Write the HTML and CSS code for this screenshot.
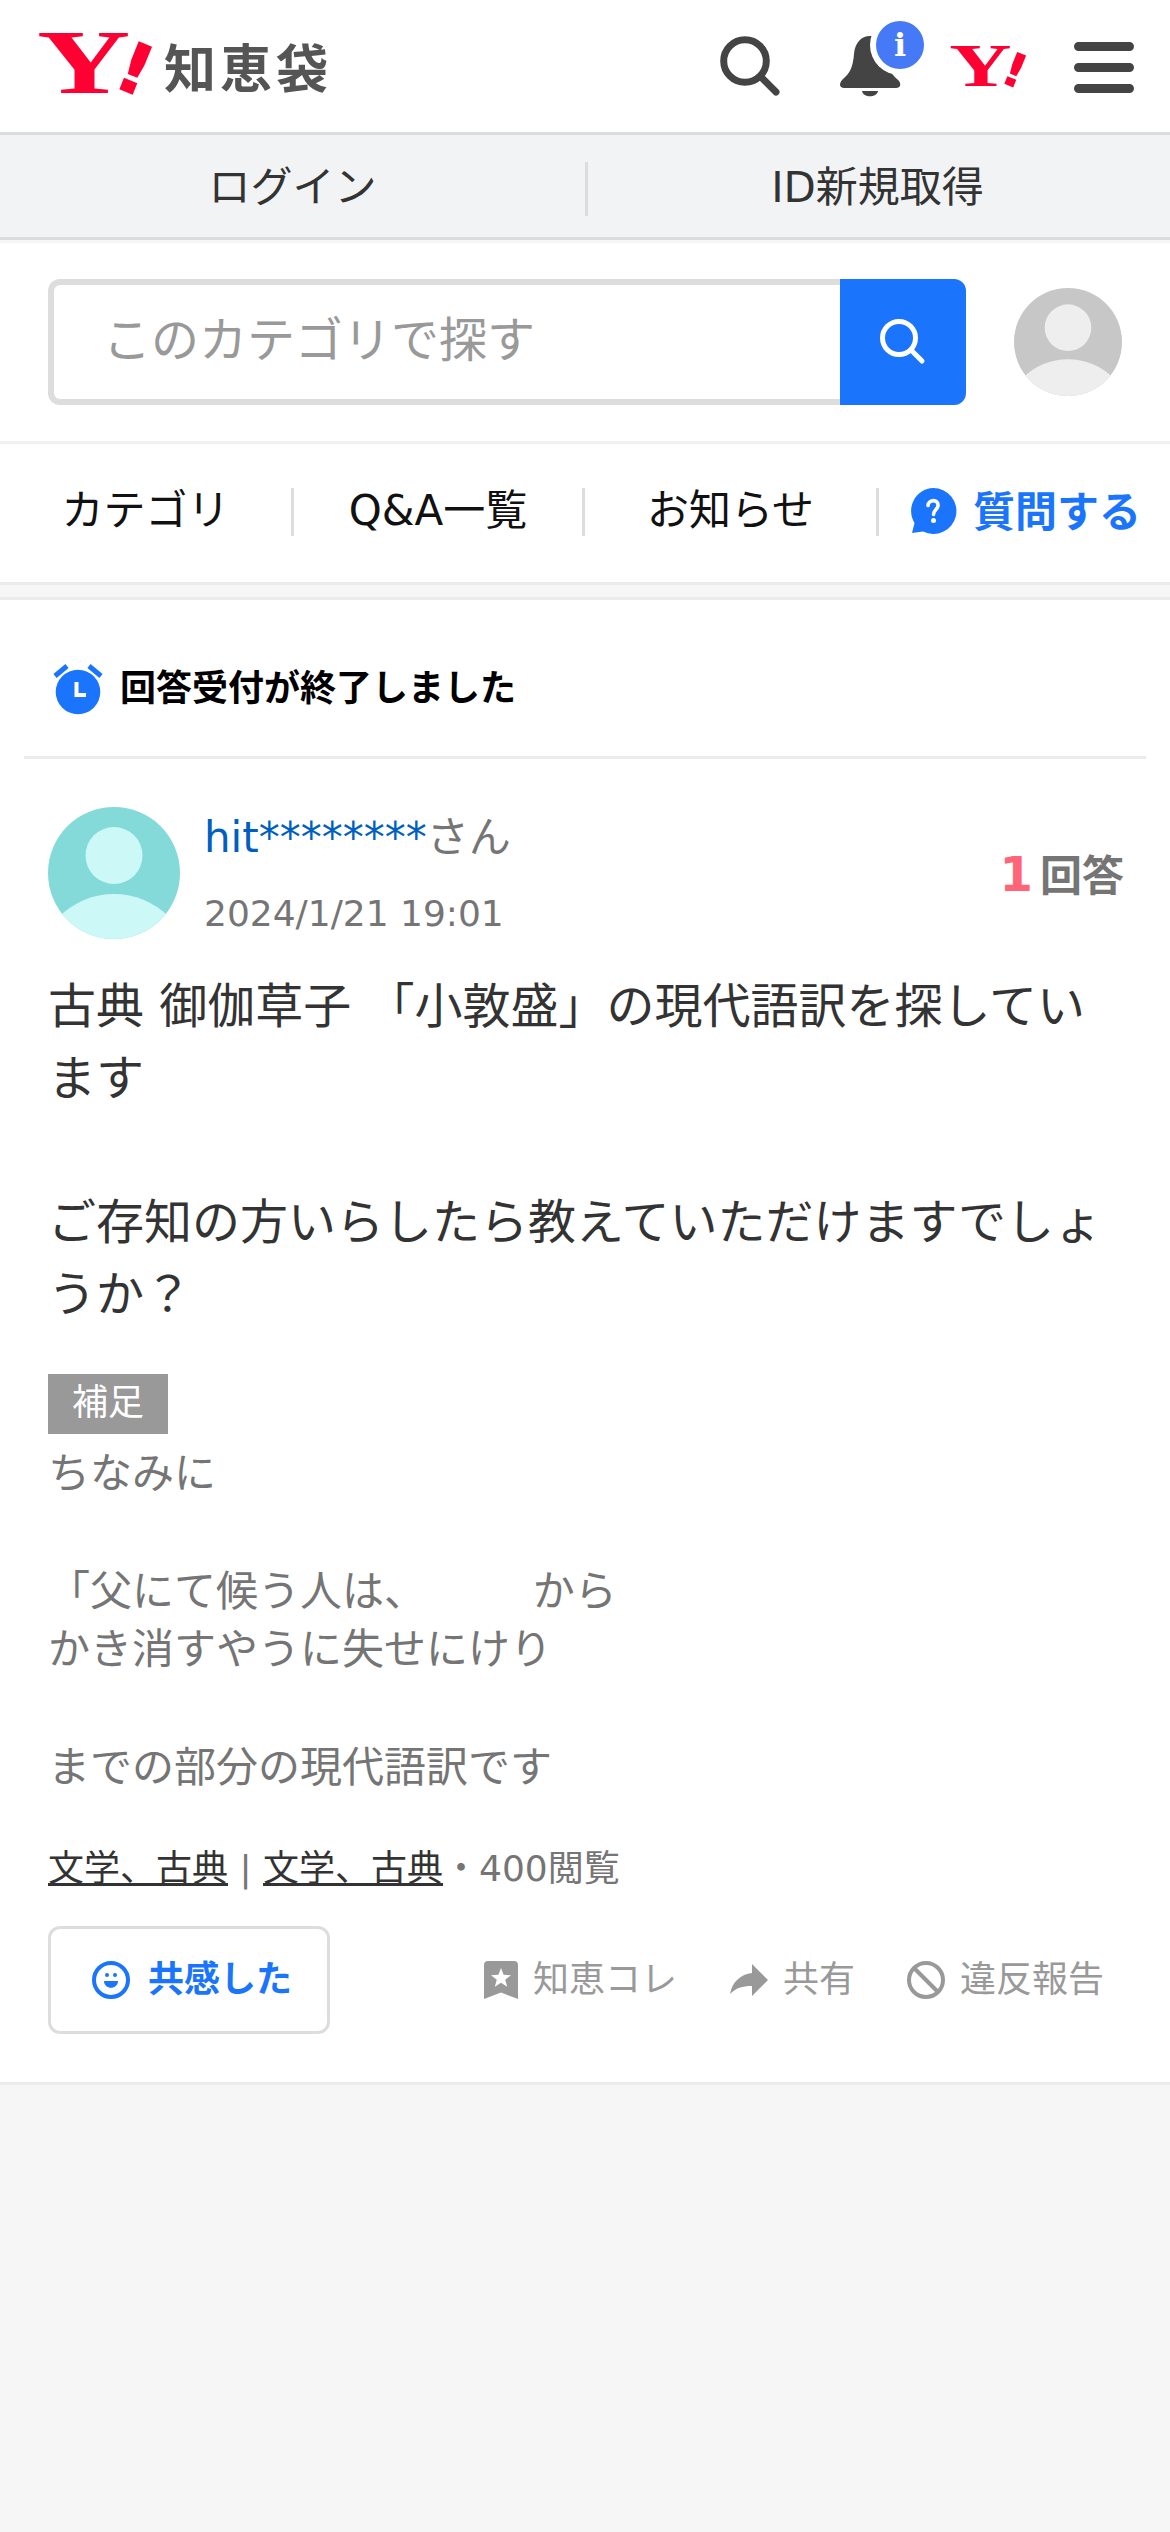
FILE: index.html
```html
<!DOCTYPE html>
<html lang="ja">
<head>
<meta charset="utf-8">
<title>Yahoo!知恵袋</title>
<link rel="stylesheet" href="styles.css">
</head>
<body>
<header class="masthead">
  <a class="logo">
    <svg class="logo-y" viewBox="0 0 120 66" width="120" height="66">
      <g fill="#ff0033">
        <text class="mark-y" transform="translate(-1 62) scale(1.42 1)" font-size="91">Y</text>
        <text class="mark-bang" transform="translate(88 61) rotate(22) scale(1.15 1)" text-anchor="middle" font-size="71">!</text>
      </g>
    </svg>
    <span class="logo-name">知恵袋</span>
  </a>
  <nav class="tools">
    <svg class="tool-search" viewBox="0 0 60 60" width="60" height="60" fill="none" stroke="#444" stroke-width="7"><circle cx="25" cy="25" r="21.3"/><path d="M41 41 56 56" stroke-linecap="round"/></svg>
    <svg class="tool-bell" viewBox="0 0 84 76" width="84" height="76">
      <path fill="#444" d="M30 15C21 15 15 22 14 33C13 46 10 52 3 58C-2 63 0 67 4 67H56C61 67 62 62 57 58C51 53 47 46 46 33L44 15ZM22 70H38C37 77 23 77 22 70Z"/>
      <circle cx="60" cy="24" r="30" fill="#fff"/><circle cx="60" cy="24" r="24" fill="#4679f6"/>
      <text class="info" x="60" y="35" text-anchor="middle" fill="#fff" font-size="32">i</text>
    </svg>
    <svg class="tool-y" viewBox="0 0 120 66" width="80" height="44">
      <g fill="#ff0033">
        <text class="mark-y" transform="translate(-1 62) scale(1.42 1)" font-size="91">Y</text>
        <text class="mark-bang" transform="translate(88 61) rotate(22) scale(1.15 1)" text-anchor="middle" font-size="71">!</text>
      </g>
    </svg>
    <svg class="tool-menu" viewBox="0 0 60 51" width="60" height="51" stroke="#444" stroke-width="9" stroke-linecap="round"><path d="M4.5 4.5h51M4.5 25.5h51M4.5 46.5h51"/></svg>
  </nav>
</header>
<nav class="account"><a>ログイン</a><a>ID新規取得</a></nav>
<section class="search">
  <div class="search-box"><span class="search-hint">このカテゴリで探す</span><span class="search-go"><svg viewBox="0 0 48 48" width="48" height="48" fill="none" stroke="#fff" stroke-width="5"><circle cx="20" cy="20" r="16.5"/><path d="M32 32 43 43" stroke-linecap="round"/></svg></span></div>
  <svg class="me" viewBox="0 0 132 132" width="108" height="108"><clipPath id="c"><circle cx="66" cy="66" r="66"/></clipPath><g clip-path="url(#c)"><path fill="#c7c7c7" d="M0 0h132v132H0z"/><circle cx="66" cy="48.500" r="28.500" fill="#eee"/><circle cx="66" cy="165" r="78" fill="#eee"/></g></svg>
</section>
<nav class="menu">
  <a>カテゴリ</a><a>Q&amp;A一覧</a><a>お知らせ</a>
  <a class="ask"><svg viewBox="0 0 46 46" width="46" height="46"><path fill="#1b75fc" d="M23 0A23 23 0 1 1 13 43.500L2 45 4.500 35A23 23 0 0 1 23 0Z"/><path d="M18 17.500C18.500 11 28.500 11 28 17.500C28 21.500 23.500 21.500 23.500 26.500" fill="none" stroke="#fff" stroke-width="3.600" stroke-linecap="round"/><circle cx="23.500" cy="32.500" r="2.500" fill="#fff"/></svg><span>質問する</span></a>
</nav>
<main class="card">
  <div class="status"><svg viewBox="0 0 50 50" width="50" height="50"><circle cx="25" cy="28" r="22.300" fill="#1b75fc"/><path d="M2 12 14 2M48 12 36 2" stroke="#1b75fc" stroke-width="5"/><path d="M23.500 18v13H33" fill="none" stroke="#fff" stroke-width="4"/></svg><span>回答受付が終了しました</span></div>
  <div class="asker">
    <svg viewBox="0 0 132 132" width="132" height="132"><g clip-path="url(#c)"><path fill="#83dad8" d="M0 0h132v132H0z"/><circle cx="66" cy="48.500" r="28.500" fill="#ccf8f7"/><circle cx="66" cy="165" r="78" fill="#ccf8f7"/></g></svg>
    <div class="who"><div class="name"><a>hit********</a>さん</div><div class="date">2024/1/21 19:01</div></div>
    <div class="count"><b>1</b>回答</div>
  </div>
  <p class="question">古典 御伽草子 「小敦盛」の現代語訳を探しています<br><br>ご存知の方いらしたら教えていただけますでしょうか？</p>
  <span class="tag">補足</span>
  <p class="extra">ちなみに<br><br>「父にて候う人は、&nbsp;&nbsp;&nbsp;&nbsp;&nbsp;&nbsp;&nbsp;&nbsp;から<br>かき消すやうに失せにけり<br><br>までの部分の現代語訳です</p>
  <div class="meta"><a>文学、古典</a> | <a>文学、古典</a>・400閲覧</div>
  <div class="actions">
    <button class="agree"><svg viewBox="0 0 38 38" width="38" height="38"><circle cx="19" cy="19" r="17" fill="none" stroke="#1b75fc" stroke-width="4"/><circle cx="15" cy="14" r="2" fill="#1b75fc"/><circle cx="23" cy="14" r="2" fill="#1b75fc"/><path d="M12 20h14c0 9-14 9-14 0Z" fill="#1b75fc"/></svg><span>共感した</span></button>
    <a class="act keep"><svg viewBox="0 0 34 38" width="34" height="38"><path fill="#999" d="M4 0H30Q34 0 34 4V38L17 31.500 0 38V4Q0 0 4 0Z"/><path fill="#fff" d="M17 7l2.600 6.800 7.400.4-5.800 4.500 2 7.100L17 21.800l-6.200 4 2-7.100L7 14.200l7.400-.4Z"/></svg><span>知恵コレ</span></a>
    <a class="act share"><svg viewBox="0 0 38 32" width="38" height="32"><path fill="#999" d="M22 0 38 16 22 32V22C12 22 6 24 0 30C2 18 11 10 22 9Z"/></svg><span>共有</span></a>
    <a class="act report"><svg viewBox="0 0 38 38" width="38" height="38" fill="none" stroke="#999" stroke-width="4"><circle cx="19" cy="19" r="17"/><path d="M7 7 31 31"/></svg><span>違反報告</span></a>
  </div>
</main>
</body>
</html>
```
FILE: styles.css
```css
* { box-sizing: border-box; }
body {
  margin: 0;
  background: #f6f6f6;
  color: #333;
  font-family: "DejaVu Sans", "Noto Sans CJK JP", sans-serif;
  font-size: 42px;
}
svg { display: block; flex: none; overflow: visible; }
p { margin: 0; }

.masthead {
  display: flex;
  justify-content: space-between;
  height: 132px;
  padding: 0 36px 0 38px;
  background: #fff;
}
.logo { display: flex; align-items: flex-start; padding-top: 31px; }
.logo-name {
  margin-left: 6px;
  color: #555;
  font-size: 52px;
  font-weight: 700;
  line-height: 78px;
  letter-spacing: 4px;
}
.mark-y { font-family: "Liberation Serif", serif; font-weight: 700; }
.mark-bang { font-family: "DejaVu Sans", sans-serif; font-weight: 700; }
.info { font-family: "DejaVu Serif", serif; font-weight: 700; }
.tools { display: flex; align-items: flex-start; }
.tool-search { margin-top: 36px; }
.tool-bell { margin: 21px 0 0 60px; }
.tool-y { margin: 45px 0 0 26px; }
.tool-menu { margin: 42px 0 0 44px; }

.account {
  display: flex;
  height: 108px;
  background: #f2f3f5;
  border-top: 3px solid #dadddd;
  border-bottom: 3px solid #dadddd;
}
.account a {
  display: flex;
  flex: 1;
  justify-content: center;
  line-height: 105px;
}
.account a + a { position: relative; }
.account a + a::before {
  content: "";
  position: absolute;
  left: 0;
  top: 27px;
  width: 3px;
  height: 54px;
  background: #dadddd;
}

.search {
  display: flex;
  align-items: center;
  gap: 48px;
  height: 204px;
  padding: 0 48px;
  background: #fff;
  border-bottom: 3px solid #f1f1f1;
  box-shadow: inset 0 3px #f6f6f6;
}
.search-box,
.me { margin-top: 3px; }
.search-box {
  display: flex;
  width: 918px;
  height: 126px;
  border: 6px solid #ddd;
  border-right: 0;
  border-radius: 12px;
}
.search-hint {
  flex: 1;
  padding-left: 49px;
  color: #999;
  font-size: 48px;
  line-height: 111px;
}
.search-go {
  display: grid;
  place-items: center;
  width: 126px;
  margin: -6px 0;
  background: #1b75fc;
  border-radius: 0 12px 12px 0;
}

.menu {
  display: grid;
  grid-template-columns: 291px 291px 294px 1fr;
  align-items: center;
  height: 141px;
  padding-bottom: 3px;
  background: #fff;
  border-bottom: 3px solid #ebebeb;
  color: #111;
}
.menu a { height: 48px; line-height: 46px; text-align: center; }
.menu a + a { border-left: 3px solid #ddd; }
.menu .ask {
  display: flex;
  gap: 17px;
  padding-left: 31px;
  color: #1b75fc;
  font-weight: 700;
  line-height: 50px;
}

.card {
  height: 1488px;
  margin-top: 12px;
  padding: 0 48px;
  background: #fff;
  border-top: 3px solid #ebebeb;
  border-bottom: 3px solid #ebebeb;
}
.status {
  display: flex;
  align-items: center;
  gap: 17px;
  height: 159px;
  margin: 0 -24px;
  padding: 22px 29px 0;
  border-bottom: 3px solid #ebebeb;
  color: #000;
  font-size: 36px;
  font-weight: 700;
}
.status span { line-height: 54px; }
.asker { display: flex; align-items: flex-start; height: 180px; padding-top: 48px; }
.who { padding-top: 1px; margin-left: 24px; color: #757575; }
.name { line-height: 60px; }
.name a { color: #005fc0; }
.date { margin-top: 19px; font-size: 36px; line-height: 54px; }
.count {
  display: flex;
  align-items: baseline;
  gap: 7px;
  margin: 37px -2px 0 auto;
  color: #757575;
  font-weight: 700;
  line-height: 60px;
}
.count b { color: #ff6477; font-size: 48px; }
.question {
  margin: 31px 0 0;
  font-size: 48px;
  line-height: 72px;
}
.tag {
  display: block;
  width: 120px;
  height: 60px;
  margin-top: 44px;
  background: #999;
  color: #fff;
  font-size: 36px;
  line-height: 58px;
  text-align: center;
}
.extra { margin-top: 11px; color: #757575; line-height: 58.8px; }
.meta { margin-top: 44.2px; color: #757575; font-size: 36px; line-height: 54px; }
.meta a { color: #333; text-decoration: underline; text-decoration-thickness: 3px; }
.actions {
  display: flex;
  align-items: center;
  margin-top: 30px;
  color: #999;
  font-size: 36px;
}
.actions span { padding-bottom: 7px; }
.agree {
  display: flex;
  align-items: center;
  gap: 18px;
  width: 282px;
  height: 108px;
  padding: 0 0 0 41px;
  background: #fff;
  border: 3px solid #ddd;
  border-radius: 12px;
  color: #1b75fc;
  font: inherit;
  font-weight: 700;
}
.act { display: flex; align-items: center; gap: 15px; }
.keep { margin-left: 154px; }
.share { margin-left: 53px; }
.report { margin-left: 52px; }
```
